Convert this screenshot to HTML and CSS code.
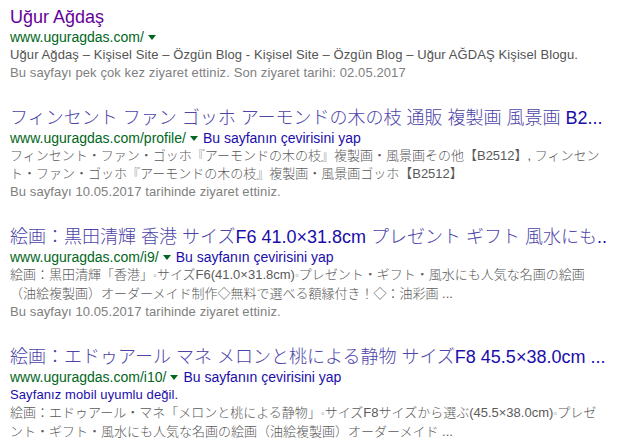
FILE: index.html
```html
<!DOCTYPE html>
<html lang="tr">
<head>
<meta charset="utf-8">
<title>Arama sonuçları</title>
<link rel="stylesheet" href="styles.css">
</head>
<body>
<div class="results">
  <div class="result">
    <h3 class="title visited">Uğur Ağdaş</h3>
    <div class="url-line"><cite class="url">www.uguragdas.com/</cite><span class="arrow"></span></div>
    <div class="snippet">
      <span class="line latin">Uğur Ağdaş – Kişisel Site – Özgün Blog - Kişisel Site – Özgün Blog – Uğur AĞDAŞ Kişisel Blogu.</span>
      <span class="line latin visit">Bu sayfayı pek çok kez ziyaret ettiniz. Son ziyaret tarihi: 02.05.2017</span>
    </div>
  </div>

  <div class="result">
    <h3 class="title"><span class="jp">フィンセント ファン ゴッホ アーモンドの木の枝 通販 複製画 風景画</span> B2...</h3>
    <div class="url-line"><cite class="url">www.uguragdas.com/profile/</cite><span class="arrow"></span><a class="translate">Bu sayfanın çevirisini yap</a></div>
    <div class="snippet">
      <span class="line jp">フィンセント・ファン・ゴッホ『アーモンドの木の枝』複製画・風景画その他【B2512】, フィンセン</span>
      <span class="line jp">ト・ファン・ゴッホ『アーモンドの木の枝』複製画・風景画ゴッホ【B2512】</span>
      <span class="line latin visit">Bu sayfayı 10.05.2017 tarihinde ziyaret ettiniz.</span>
    </div>
  </div>

  <div class="result">
    <h3 class="title"><span class="jp">絵画：黒田清輝 香港 サイズ</span>F6 41.0×31.8cm <span class="jp">プレゼント ギフト 風水にも</span>..</h3>
    <div class="url-line"><cite class="url">www.uguragdas.com/i9/</cite><span class="arrow"></span><a class="translate">Bu sayfanın çevirisini yap</a></div>
    <div class="snippet">
      <span class="line jp">絵画：黒田清輝「香港」<span class="dot">◦</span>サイズF6(41.0×31.8cm)<span class="dot">◦</span>プレゼント・ギフト・風水にも人気な名画の絵画</span>
      <span class="line jp">（油絵複製画）オーダーメイド制作◇無料で選べる額縁付き！◇：油彩画 ...</span>
      <span class="line latin visit">Bu sayfayı 10.05.2017 tarihinde ziyaret ettiniz.</span>
    </div>
  </div>

  <div class="result">
    <h3 class="title"><span class="jp">絵画：エドゥアール マネ メロンと桃による静物 サイズ</span>F8 45.5×38.0cm ...</h3>
    <div class="url-line"><cite class="url">www.uguragdas.com/i10/</cite><span class="arrow"></span><a class="translate">Bu sayfanın çevirisini yap</a></div>
    <div class="snippet">
      <span class="line latin mobile">Sayfanız mobil uyumlu değil.</span>
      <span class="line jp">絵画：エドゥアール・マネ「メロンと桃による静物」<span class="dot">◦</span>サイズF8サイズから選ぶ(45.5×38.0cm)<span class="dot">◦</span>プレゼ</span>
      <span class="line jp">ント・ギフト・風水にも人気な名画の絵画（油絵複製画）オーダーメイド ...</span>
    </div>
  </div>
</div>
</body>
</html>
```

FILE: styles.css
```css
html, body {
  margin: 0;
  padding: 0;
  background: #ffffff;
}

body {
  font-family: "Liberation Sans", Arial, "Noto Sans CJK JP", sans-serif;
  width: 631px;
  height: 447px;
  overflow: hidden;
}

.results {
  display: flex;
  flex-direction: column;
  gap: 25px;
  padding: 6px 0 0 10px;
}

.result {
  display: flex;
  flex-direction: column;
}

.title {
  margin: 0;
  font-size: 18px;
  font-weight: normal;
  line-height: 22px;
  color: #1a0dab;
  white-space: nowrap;
}

.title.visited {
  color: #660099;
}

.title .jp {
  font-weight: 300;
  color: #4d44a8;
}

.url-line {
  display: flex;
  align-items: center;
  height: 18px;
  font-size: 14px;
  white-space: nowrap;
}

.url {
  font-style: normal;
  color: #006621;
}

.arrow {
  width: 0;
  height: 0;
  border-style: solid;
  border-width: 5px 4px 0 4px;
  border-color: #006621 transparent transparent transparent;
  margin: 1px 5px 0 4px;
}

.translate {
  color: #1a0dab;
}

.snippet {
  display: flex;
  flex-direction: column;
  font-size: 13px;
  color: #545454;
}

.line {
  display: block;
  line-height: 18px;
  white-space: nowrap;
}

.latin {
  letter-spacing: 0.1px;
}

.snippet .jp {
  font-weight: 300;
  color: #5a5a5a;
}

.visit {
  color: #808080;
}

.mobile {
  color: #1a0dab;
}

.dot {
  font-family: "DejaVu Sans", sans-serif;
  font-size: 11px;
  color: #999999;
}
```
